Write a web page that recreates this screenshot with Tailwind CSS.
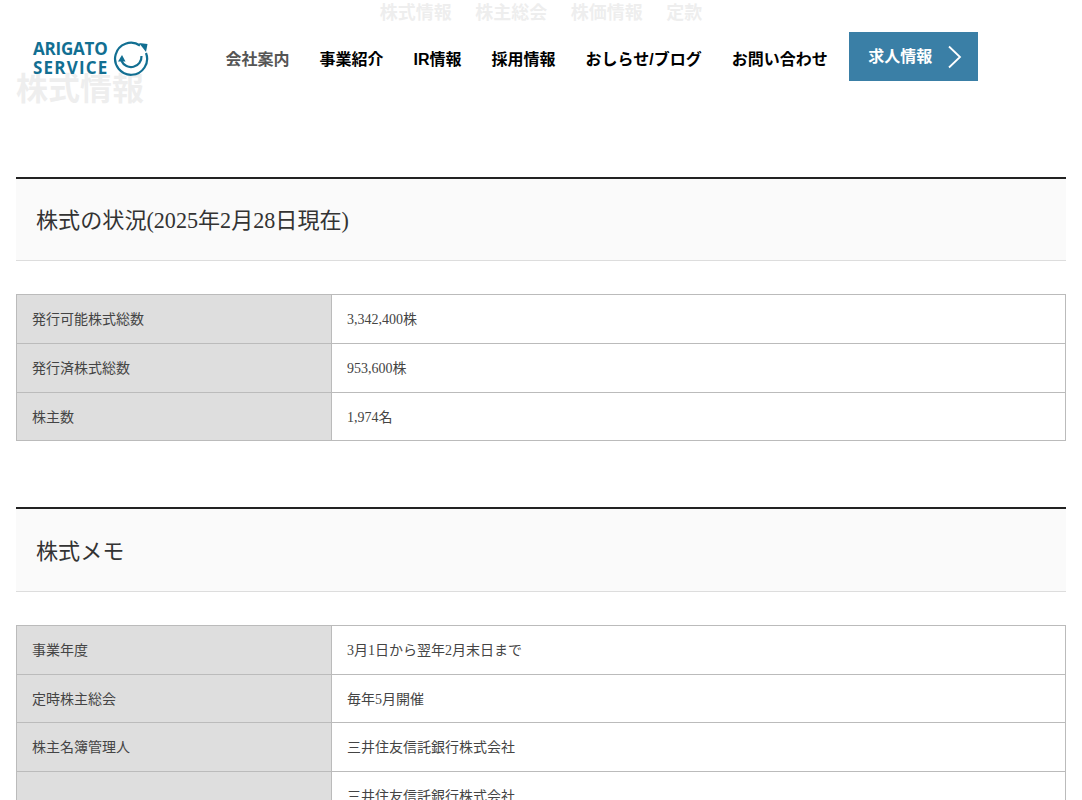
<!DOCTYPE html>
<html lang="ja"><head><meta charset="utf-8">
<script src="https://cdn.jsdelivr.net/npm/@tailwindcss/browser@4"></script>
</head>
<body class="bg-white overflow-hidden h-[800px] relative font-['Liberation_Serif','Noto_Sans_CJK_JP',serif] text-[#444]">
<div class="h-[800px] overflow-hidden">
  <ul class="flex justify-center gap-[23.500px] h-[26px] items-center text-[18px] font-bold leading-[24px] font-['Liberation_Sans','Noto_Sans_CJK_JP',sans-serif] text-[#aaa]">
    <li>株式情報</li><li>株主総会</li><li>株価情報</li><li>定款</li>
  </ul>
  <h1 class="mx-4 mt-[39px] text-[32px] leading-[48px] font-bold text-[#aaa] font-['Liberation_Sans','Noto_Sans_CJK_JP',sans-serif]">株式情報</h1>

  <section class="mx-4 mt-[64px]">
    <h2 class="border-t-2 border-b border-t-[#222] border-b-[#ddd] bg-[#fafafa] h-[84px] flex items-center pl-[20px] pt-[2px] text-[22.1px] text-[#333]">株式の状況(2025年2月28日現在)</h2>
    <table class="w-full mt-[33px] border-collapse text-[14px] table-fixed">
      <tbody>
        <tr class="h-[49px]"><th class="w-[315px] bg-[#dedede] border border-[#bbb] font-normal text-left px-[15px]">発行可能株式総数</th><td class="border border-[#bbb] px-[15px]">3,342,400株</td></tr>
        <tr class="h-[49px]"><th class="bg-[#dedede] border border-[#bbb] font-normal text-left px-[15px]">発行済株式総数</th><td class="border border-[#bbb] px-[15px]">953,600株</td></tr>
        <tr class="h-[48px]"><th class="bg-[#dedede] border border-[#bbb] font-normal text-left px-[15px] pt-[2px]">株主数</th><td class="border border-[#bbb] px-[15px] pt-[2px]">1,974名</td></tr>
      </tbody>
    </table>
  </section>

  <section class="mx-4 mt-[66px]">
    <h2 class="border-t-2 border-b border-t-[#222] border-b-[#ddd] bg-[#fafafa] h-[85px] flex items-center pl-[20px] pt-[4px] text-[22.1px] text-[#333]">株式メモ</h2>
    <table class="w-full mt-[33px] border-collapse text-[14px] table-fixed">
      <tbody>
        <tr class="h-[49px]"><th class="w-[315px] bg-[#dedede] border border-[#bbb] font-normal text-left px-[15px]">事業年度</th><td class="border border-[#bbb] px-[15px]">3月1日から翌年2月末日まで</td></tr>
        <tr class="h-[48px]"><th class="bg-[#dedede] border border-[#bbb] font-normal text-left px-[15px] pt-[2px]">定時株主総会</th><td class="border border-[#bbb] px-[15px] pt-[2px]">毎年5月開催</td></tr>
        <tr class="h-[49px]"><th class="bg-[#dedede] border border-[#bbb] font-normal text-left px-[15px]">株主名簿管理人</th><td class="border border-[#bbb] px-[15px]">三井住友信託銀行株式会社</td></tr>
        <tr class="h-[49px]"><th class="bg-[#dedede] border border-[#bbb] font-normal text-left px-[15px]"></th><td class="border border-[#bbb] px-[15px]">三井住友信託銀行株式会社</td></tr>
      </tbody>
    </table>
  </section>
</div>

<header class="absolute top-0 left-0 w-full h-[115px] bg-white/80 font-['Liberation_Sans','Noto_Sans_CJK_JP',sans-serif]">
  <div class="flex items-start pl-[33px]">
    <div class="flex items-start mt-[38px] w-[192.500px]">
      <div class="text-[#126f92] font-['Open_Sans',sans-serif] font-bold text-[17px] leading-[19px] w-[80px] pt-[1px]"><div class="tracking-[-0.2px]">ARIGATO</div><div class="tracking-[1.2px]">SERVICE</div></div>
      <svg class="mt-[3px]" width="36" height="36" viewBox="0 0 36 36" fill="none" stroke="#126f92" stroke-width="2.2">
        <path d="M27 4.500A16 16 0 1 0 33 12"/>
        <path d="M8.500 20A10.500 10.500 0 0 0 28.500 15"/>
        <path d="M26 2L34.500 3L33 11Z" fill="#126f92" stroke="none"/>
        <path d="M5 20.500L9 14L12.500 20.500Z" fill="#126f92" stroke="none"/>
      </svg>
    </div>
    <nav class="flex items-center gap-[30px] h-[24px] mt-[48px] text-[16px] font-bold text-black">
      <a class="text-[#555]">会社案内</a><a>事業紹介</a><a>IR情報</a><a>採用情報</a><a>おしらせ/ブログ</a><a>お問い合わせ</a>
    </nav>
    <a class="ml-[21px] mt-[32px] w-[129px] h-[49px] bg-[#3a7fa6] text-white font-bold text-[16px] flex items-center pl-[19.500px] pt-[1px] gap-[14px]">求人情報
      <svg class="-mt-[1px] ml-[1px]" width="16" height="24" viewBox="0 0 16 24" fill="none" stroke="white" stroke-width="1.8"><path d="M2 1.500L13 12L2 22.500"/></svg>
    </a>
  </div>
</header>
</body></html>
